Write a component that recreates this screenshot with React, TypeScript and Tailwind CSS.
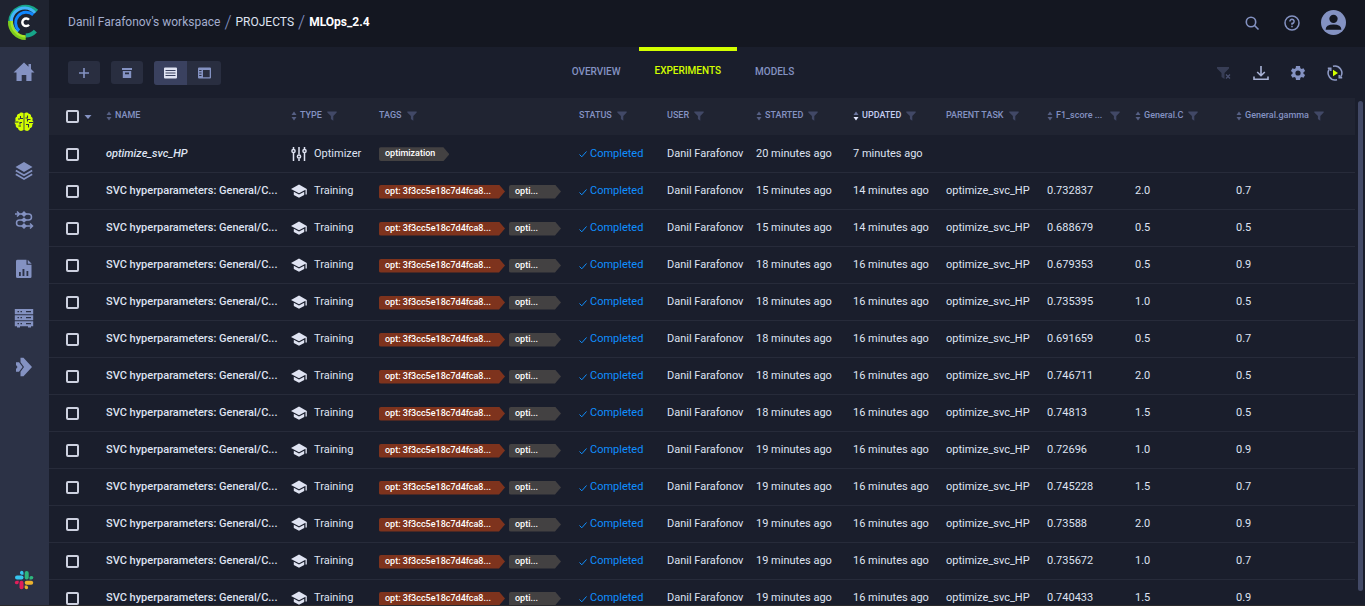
import type { ReactNode } from "react";

const rows = [
  ["15", "14", "0.732837", "2.0", "0.7"],
  ["15", "14", "0.688679", "0.5", "0.5"],
  ["18", "16", "0.679353", "0.5", "0.9"],
  ["18", "16", "0.735395", "1.0", "0.5"],
  ["18", "16", "0.691659", "0.5", "0.7"],
  ["18", "16", "0.746711", "2.0", "0.5"],
  ["18", "16", "0.74813", "1.5", "0.5"],
  ["19", "16", "0.72696", "1.0", "0.9"],
  ["19", "16", "0.745228", "1.5", "0.7"],
  ["19", "16", "0.73588", "2.0", "0.9"],
  ["19", "16", "0.735672", "1.0", "0.7"],
  ["19", "16", "0.740433", "1.5", "0.9"],
];

function Icon({ className, children, box = "0 0 24 24" }: { className: string; children: ReactNode; box?: string }) {
  return (
    <svg className={className} viewBox={box} fill="currentColor" aria-hidden="true">
      {children}
    </svg>
  );
}

function Logo() {
  return (
    <svg className="h-[47px] w-[49px]" viewBox="0 0 49 47" fill="none" aria-hidden="true">
      <path d="M9.700 22.300A16 16 0 0 1 37 11" stroke="#17a589" strokeWidth="3.200" />
      <path d="M17.500 32.300A13.200 13.200 0 1 1 35 13" stroke="#43b5fb" strokeWidth="3" />
      <path d="M19.200 30.600A10.500 10.500 0 1 1 33.200 14.900" stroke="#0f86ff" strokeWidth="2.800" />
      <path d="M25.700 35.500A13.300 13.300 0 0 0 35.400 31.200" stroke="#17a589" strokeWidth="4.200" />
      <path d="M9.500 21A16.500 16.500 0 0 0 25.700 38.600" stroke="#7ccb1c" strokeWidth="3" />
      <path d="M11.800 21A14.200 14.200 0 0 0 25.700 36.400" stroke="#a5e52b" strokeWidth="2.400" />
      <path d="M29 19.800A3.800 3.800 0 1 0 29 24.800" stroke="#fff" strokeWidth="2.500" />
    </svg>
  );
}

function Home() {
  return (
    <Icon className="size-6" box="0 1 24 24">
      <path d="M12 2.500 1.500 12.500H4.500V21H9.700V15H14.300V21H19.500V12.500H22.500L19 9.100V4H16.500V6.800Z" />
    </Icon>
  );
}

function Brain() {
  return (
    <svg className="size-5" viewBox="0 0 20 20" aria-hidden="true">
      <path
        fill="#d3ff00"
        d="M9.600 1.200C8.300 0 6 .3 5.300 1.700 3.500 1.700 2.600 3.200 3 4.600 1.400 5.300.9 6.900 1.700 8.300.2 9.600.3 11.800 1.800 12.800 1.300 14.600 2.400 16 4 16.200 4.500 18.300 6.300 19.400 8 18.800L9.600 18ZM10.400 1.200C11.700 0 14 .3 14.700 1.700 16.500 1.700 17.400 3.200 17 4.600 18.600 5.300 19.100 6.900 18.300 8.300 19.800 9.600 19.700 11.800 18.200 12.800 18.700 14.600 17.600 16 16 16.200 15.500 18.300 13.700 19.400 12 18.800L10.400 18Z"
      />
      <path
        fill="none"
        stroke="#2c3246"
        strokeWidth="1.100"
        d="M0 10H4.500M6.500 4V6.500H9M4 7H6M6 12.500V10.500H8M4.500 14H7M13.500 3.500V6H11.500M16.500 7.500H13.500V9.500M19.500 10.500H15M12 12.500H14.500V15.500"
      />
    </svg>
  );
}

function Layers() {
  return (
    <Icon className="size-5" box="0 0 20 20">
      <path d="M10 1 18.500 6 10 11 1.500 6Z" />
      <path fill="none" stroke="currentColor" strokeWidth="1.700" d="M1.800 9.600 10 14.300 18.200 9.600M1.800 13.300 10 18 18.200 13.300" />
    </Icon>
  );
}

function Pipeline() {
  return (
    <svg className="size-5" viewBox="0 0 20 20" fill="none" stroke="currentColor" strokeWidth="1.500" aria-hidden="true">
      <path d="M1 4H14.500A3 3 0 0 1 14.500 10H5.500A3 3 0 0 0 5.500 16H18M3 1.500 5.500 4 3 6.500M16 13.500 18.500 16 16 18.500" />
      <path fill="currentColor" stroke="none" d="M7 4 10 1 13 4 10 7ZM7 10 10 7.300 13 10 10 12.700ZM7 16 10 13 13 16 10 19Z" />
    </svg>
  );
}

function Report() {
  return (
    <Icon className="size-5" box="0 0 20 20">
      <path
        fillRule="evenodd"
        d="M3.500.8H12.500V5.800H17.500V17.700Q17.500 19 16.200 19H3.500Q2 19 2 17.700V2.200Q2 .8 3.500.8ZM5 13V17H6.800V13ZM8.500 10V17H10.400V10ZM12.500 12V17H14.300V12Z"
      />
      <path d="M13.700.8 17.700 4.700H13.700Z" />
    </Icon>
  );
}

function Servers() {
  return (
    <Icon className="size-5" box="0 0 20 20">
      <path
        fillRule="evenodd"
        d="M.8 1H19.200V6.200H.8ZM3.500 3V4.200H5V3ZM6.500 3V4.200H8V3ZM12 3V4.200H17V3ZM.8 7.200H19.200V12.200H.8ZM3.500 9V10.200H5V9ZM6.500 9V10.200H8V9ZM12 9V10.200H17V9ZM.8 13.200H19.200V18.200H17V19.500H14V18.200H6V19.500H3V18.200H.8ZM3.500 15V16.200H5V15ZM6.500 15V16.200H8V15ZM12 15V16.200H17V15Z"
      />
    </Icon>
  );
}

function Apps() {
  return (
    <Icon className="size-5" box="0 0 20 20">
      <path d="M6.500.8H9.500L18 10 9.500 19.200H6.500V14.800L10 10 6.500 5.200Z" />
      <path d="M2 5.200H5L8.700 10 5 14.800H2V12L3.500 10 2 8Z" />
    </Icon>
  );
}

function Slack() {
  return (
    <svg className="size-5" viewBox="0 0 20 20" aria-hidden="true">
      <g fill="#36c5f0">
        <rect x="1" y="5.500" width="8.500" height="4" rx="2" />
        <path d="M7.500.8A2 2 0 0 1 9.500 2.800V4.700H7.500A2 2 0 0 1 7.500.8Z" />
      </g>
      <g fill="#2eb67d">
        <rect x="10.700" y="1" width="4" height="8.500" rx="2" />
        <path d="M19.300 7.500A2 2 0 0 1 17.300 9.500H15.500V7.500A2 2 0 0 1 19.300 7.500Z" />
      </g>
      <g fill="#ecb22e">
        <rect x="10.700" y="10.700" width="8.500" height="4" rx="2" />
        <path d="M12.700 19.300A2 2 0 0 1 10.700 17.300V15.500H12.700A2 2 0 0 1 12.700 19.300Z" />
      </g>
      <g fill="#e01e5a">
        <rect x="5.500" y="10.700" width="4" height="8.500" rx="2" />
        <path d="M.8 12.700A2 2 0 0 1 2.800 10.700H4.700V12.700A2 2 0 0 1 .8 12.700Z" />
      </g>
    </svg>
  );
}

function SortArrows({ active = false }: { active?: boolean }) {
  return (
    <svg className="h-2.5 w-1.5 shrink-0" viewBox="0 0 6 10" aria-hidden="true">
      <path fill={active ? "#6b76a0" : "#566084"} d="M3 .5 5.500 4H.5Z" />
      <path fill={active ? "#e4e9ff" : "#566084"} d="M3 9.500 .5 6H5.500Z" />
    </svg>
  );
}

function Funnel() {
  return (
    <svg className="size-2.5 shrink-0" viewBox="0 0 10 10" aria-hidden="true">
      <path fill="#414866" d="M.3.5H9.700V1.500L6.300 5V9.800L3.900 8V5L.3 1.500Z" />
    </svg>
  );
}

function Head({ label, sort = false, filter = true, active = false, wide = false }: {
  label: string;
  sort?: boolean;
  filter?: boolean;
  active?: boolean;
  wide?: boolean;
}) {
  return (
    <th scope="col" className="px-2 pb-0.5 text-left font-medium">
      <div className="flex items-center">
        <button type="button" className={`flex items-center gap-[3px] ${active ? "text-[#c3cdf0]" : ""}`}>
          {sort && <SortArrows active={active} />}
          <span className="whitespace-nowrap">{label}</span>
        </button>
        {filter && (
          <button type="button" aria-label={`Filter ${label}`} className={wide ? "ml-2" : "ml-[5px]"}>
            <Funnel />
          </button>
        )}
      </div>
    </th>
  );
}

function Check({ label }: { label: string }) {
  return (
    <input
      type="checkbox"
      aria-label={label}
      className="block size-[13px] shrink-0 appearance-none rounded-[2px] border-2 border-[#cdd1e0] checked:bg-[#8492c2]"
    />
  );
}

function Tag({ children, red = false }: { children: ReactNode; red?: boolean }) {
  return (
    <span
      className={`block h-3.5 min-w-[52px] rounded-l-[2px] pr-3.5 pl-1.5 text-[9px] leading-[13px] font-medium whitespace-nowrap text-white [clip-path:polygon(0_0,calc(100%_-_6px)_0,100%_50%,calc(100%_-_6px)_100%,0_100%)] ${red ? "bg-[#7e331d]" : "bg-[#434142]"}`}
    >
      {children}
    </span>
  );
}

function Completed() {
  return (
    <span className="flex items-center gap-[3px] text-[#0f8fff]">
      <svg className="h-2 w-2" viewBox="0 0 8 8" fill="none" stroke="currentColor" aria-hidden="true">
        <path d="M.5 4.500 2.800 6.800 7.500 1.500" />
      </svg>
      Completed
    </span>
  );
}

function Row({ name, optimizer = false, started, updated, parent, f1, c, gamma }: {
  name: string;
  optimizer?: boolean;
  started: string;
  updated: string;
  parent?: string;
  f1?: string;
  c?: string;
  gamma?: string;
}) {
  return (
    <tr className="h-[37px] border-b border-[#272b3a] [&>td]:pt-0.5">
      <td className="pl-[17px]">
        <Check label={`Select ${name}`} />
      </td>
      <td className={`px-2 font-medium ${optimizer ? "italic" : ""}`}>{name}</td>
      <td className="pl-2">
        <span className="flex items-center gap-[7px]">
          {optimizer ? (
            <svg className="size-4" viewBox="0 0 16 16" fill="none" stroke="currentColor" strokeWidth="1.500" aria-hidden="true">
              <path d="M2.500 1V3M2.500 7V15M8 1V8.500M8 12.500V15M13.500 1V3M13.500 7V15" />
              <circle cx="2.500" cy="5" r="1.600" />
              <circle cx="8" cy="10.500" r="1.600" />
              <circle cx="13.500" cy="5" r="1.600" />
            </svg>
          ) : (
            <svg className="size-4" viewBox="0 1 16 16" fill="currentColor" aria-hidden="true">
              <path d="M8 1.500 0 6 8 10.200 14.500 6.800V11.500H15.800V6Z" />
              <path d="M2.800 8.800V12L8 14.700 13.200 12V8.800L8 11.600Z" />
            </svg>
          )}
          {optimizer ? "Optimizer" : "Training"}
        </span>
      </td>
      <td className="px-2">
        <span className="flex gap-1">
          {optimizer ? (
            <Tag>optimization</Tag>
          ) : (
            <>
              <Tag red>opt: 3f3cc5e18c7d4fca8...</Tag>
              <Tag>opti...</Tag>
            </>
          )}
        </span>
      </td>
      <td className="px-2">
        <Completed />
      </td>
      <td className="px-2">Danil Farafonov</td>
      <td className="px-2">{started} minutes ago</td>
      <td className="px-2">{updated} minutes ago</td>
      <td className="px-2">{parent}</td>
      <td className="px-2">{f1}</td>
      <td className="px-2">{c}</td>
      <td className="px-2">{gamma}</td>
    </tr>
  );
}

const nav = [
  { label: "Dashboard", icon: <Home /> },
  { label: "Projects", icon: <Brain /> },
  { label: "Datasets", icon: <Layers /> },
  { label: "Pipelines", icon: <Pipeline /> },
  { label: "Reports", icon: <Report /> },
  { label: "Workers and queues", icon: <Servers /> },
  { label: "Applications", icon: <Apps /> },
];

export default function App() {
  return (
    <div className="flex h-screen overflow-hidden border-b border-[#2b2a2c] bg-[#1a1e2c] font-[Roboto,sans-serif] text-[11px] text-[#dfe3f2]">
      <aside className="flex w-[49px] shrink-0 flex-col bg-[#2c3246] text-[#8492c2]">
        <a href="#home" aria-label="Home" className="block bg-[#1f2330]">
          <Logo />
        </a>
        <nav className="flex flex-col pt-px pr-px">
          {nav.map((item) => (
            <a key={item.label} href="#" aria-label={item.label} className="flex h-[49px] items-center justify-center">
              {item.icon}
            </a>
          ))}
        </nav>
        <a href="#slack" aria-label="Slack" className="mt-auto mb-[15px] flex justify-center pr-px">
          <Slack />
        </a>
      </aside>

      <div className="flex min-w-0 flex-1 flex-col">
        <header className="flex h-[47px] shrink-0 items-center justify-between bg-[#141721] pr-[19px] pb-0.5 pl-[19px]">
          <nav aria-label="Breadcrumb" className="flex items-center gap-1 pb-0.5 text-xs">
            <a href="#workspace" className="text-[#a3adce]">Danil Farafonov's workspace</a>
            <span className="text-lg leading-none font-light text-[#8492c2]">/</span>
            <a href="#projects" className="text-[#dfe3f2]">PROJECTS</a>
            <span className="text-lg leading-none font-light text-[#8492c2]">/</span>
            <a href="#project" className="font-bold text-white">MLOps_2.4</a>
          </nav>
          <div className="flex items-center text-[#8492c2]">
            <button type="button" aria-label="Search" className="mr-6">
              <svg className="size-4" viewBox="0 0 16 16" fill="none" stroke="currentColor" strokeWidth="1.600" aria-hidden="true">
                <circle cx="7" cy="7" r="4.700" />
                <path d="M10.300 10.300 14.500 14.500" />
              </svg>
            </button>
            <button type="button" aria-label="Help" className="mr-[21px]">
              <svg className="size-4" viewBox="0 0 16 16" fill="none" stroke="currentColor" strokeWidth="1.500" aria-hidden="true">
                <circle cx="8" cy="8" r="7" />
                <path d="M5.900 6.500A2.100 2.100 0 1 1 8 8.500V9.700M8 10.700V12.200" />
              </svg>
            </button>
            <button type="button" aria-label="Account">
              <svg className="size-[25px]" viewBox="0 0 24 24" aria-hidden="true">
                <circle cx="12" cy="12" r="12" fill="currentColor" />
                <circle cx="12" cy="8.500" r="4" fill="#141721" />
                <path fill="#141721" d="M4.500 18.500Q4.500 14 12 14T19.500 18.500V19H4.500Z" />
              </svg>
            </button>
          </div>
        </header>

        <div className="grid h-[51px] shrink-0 grid-cols-[1fr_auto_1fr] pr-[22px] pl-[19px] text-[#8492c2]">
          <div className="flex items-center">
            <button type="button" aria-label="New experiment" className="mr-[11px] flex h-[23px] w-8 items-center justify-center rounded-[3px] bg-[#292e40]">
              <svg className="size-2.5" viewBox="0 0 10 10" fill="none" stroke="currentColor" strokeWidth="1.600" aria-hidden="true">
                <path d="M5 0V10M0 5H10" />
              </svg>
            </button>
            <button type="button" aria-label="Archive" className="mr-[11px] flex h-[23px] w-8 items-center justify-center rounded-[3px] bg-[#292e40]">
              <svg className="size-2.5" viewBox="0 0 10 10" fill="currentColor" aria-hidden="true">
                <path fillRule="evenodd" d="M0 0H10V2H0ZM.8 3H9.200V10H.8ZM3 4.500V6.200H7V4.500Z" />
              </svg>
            </button>
            <div className="flex h-6 overflow-hidden rounded-[3px] bg-[#292e40]">
              <button type="button" aria-label="Table view" className="flex w-[33px] items-center justify-center bg-[#3a415f] text-[#dfe3f2]">
                <svg className="h-3 w-[13px]" viewBox="0 0 13 12" aria-hidden="true">
                  <path fill="currentColor" fillRule="evenodd" d="M1 .5H12Q13 .5 13 1.500V10.500Q13 11.500 12 11.500H1Q0 11.500 0 10.500V1.500Q0 .5 1 .5ZM1.500 3V4H11.500V3ZM1.500 5.500V6.500H11.500V5.500ZM1.500 8V9H11.500V8Z" />
                </svg>
              </button>
              <button type="button" aria-label="Details view" className="flex w-[34px] items-center justify-center">
                <svg className="h-3 w-[13px]" viewBox="0 0 13 12" aria-hidden="true">
                  <path fill="currentColor" fillRule="evenodd" d="M1 .5H12Q13 .5 13 1.500V10.500Q13 11.500 12 11.500H1Q0 11.500 0 10.500V1.500Q0 .5 1 .5ZM1.200 3V4H3.500V3ZM1.200 5.500V6.500H3.500V5.500ZM1.200 8V9H3.500V8ZM5 3V10.200H11.700V3Z" />
                </svg>
              </button>
            </div>
          </div>
          <nav aria-label="Project sections" className="flex pr-[45px] text-[10px] font-medium">
            <a href="#overview" className="flex items-center px-[18px] pb-0.5">OVERVIEW</a>
            <a href="#experiments" className="flex items-center border-t-4 border-[#d3ff00] px-4 pb-2 text-[#d3ff00]">EXPERIMENTS</a>
            <a href="#models" className="flex items-center px-[18px] pb-0.5">MODELS</a>
          </nav>
          <div className="flex items-center justify-end gap-[21px]">
            <button type="button" aria-label="Clear filters">
              <svg className="size-4" viewBox="0 0 16 16" aria-hidden="true">
                <path fill="#373d55" d="M1 2H13V3.500L8.500 8V14L5.500 12V8L1 3.500Z" />
                <path stroke="#4a5170" strokeWidth="1.200" d="M10 9.500 14 13.500M14 9.500 10 13.500" />
              </svg>
            </button>
            <button type="button" aria-label="Download" className="text-[#a9b3d6]">
              <svg className="size-4" viewBox="0 0 16 16" fill="none" stroke="currentColor" strokeWidth="1.600" aria-hidden="true">
                <path d="M8 1V10.500M4.200 7 8 10.700 11.800 7M1 11.500V14.200H15V11.500" />
              </svg>
            </button>
            <button type="button" aria-label="Settings">
              <Icon className="size-4" box="1 1 22 22">
                <path d="M19.500 12.900a7.700 7.700 0 0 0 0-1.900l2.300-1.700-2.200-3.900-2.700 1.100a8 8 0 0 0-1.700-1L14.800 2.500h-5.600l-.4 3a8 8 0 0 0-1.700 1L4.400 5.400 2.200 9.300 4.500 11a7.700 7.700 0 0 0 0 1.900l-2.300 1.800 2.200 3.900 2.700-1.100a8 8 0 0 0 1.700 1l.4 3h5.600l.4-3a8 8 0 0 0 1.700-1l2.700 1.100 2.200-3.900ZM12 15.600a3.600 3.600 0 1 1 0-7.200 3.600 3.600 0 0 1 0 7.200Z" />
              </Icon>
            </button>
            <button type="button" aria-label="Auto refresh" className="text-[#8f9bc6]">
              <svg className="size-4" viewBox="0 0 16 16" fill="none" stroke="currentColor" strokeWidth="1.500" aria-hidden="true">
                <path d="M6 1.300A7 7 0 0 1 13.600 12M10 14.700A7 7 0 0 1 2.400 4M.8 3.200H3.800V6M15.200 12.800H12.200V10" />
                <path fill="#d3ff00" stroke="none" d="M6 4.800 11 8 6 11.200Z" />
              </svg>
            </button>
          </div>
        </div>

        <main className="flex min-h-0 flex-1 items-stretch overflow-hidden">
          <div className="min-w-0 flex-1 overflow-hidden">
            <table className="w-full table-fixed border-collapse whitespace-nowrap">
              <colgroup>
                <col className="w-[49px]" />
                <col className="w-[185px]" />
                <col className="w-[88px]" />
                <col className="w-[200px]" />
                <col className="w-[88px]" />
                <col className="w-[89px]" />
                <col className="w-[97px]" />
                <col className="w-[93px]" />
                <col className="w-[101px]" />
                <col className="w-[88px]" />
                <col className="w-[101px]" />
                <col />
              </colgroup>
              <thead>
                <tr className="h-[37px] bg-[#202432] text-[9px] text-[#8492c2]">
                  <th scope="col" className="pl-[17px]">
                    <span className="flex items-center gap-[5px]">
                      <Check label="Select all" />
                      <button type="button" aria-label="Selection options">
                        <svg className="h-1 w-2" viewBox="0 0 8 4" fill="currentColor" aria-hidden="true">
                          <path d="M.5 0H7.500L4 4Z" />
                        </svg>
                      </button>
                    </span>
                  </th>
                  <Head label="NAME" sort filter={false} />
                  <Head label="TYPE" sort />
                  <Head label="TAGS" />
                  <Head label="STATUS" />
                  <Head label="USER" />
                  <Head label="STARTED" sort />
                  <Head label="UPDATED" sort active />
                  <Head label="PARENT TASK" />
                  <Head label="F1_score ..." sort wide />
                  <Head label="General.C" sort />
                  <Head label="General.gamma" sort />
                </tr>
              </thead>
              <tbody>
                <Row name="optimize_svc_HP" optimizer started="20" updated="7" />
                {rows.map(([started, updated, f1, c, gamma], i) => (
                  <Row
                    key={i}
                    name="SVC hyperparameters: General/C..."
                    started={started}
                    updated={updated}
                    parent="optimize_svc_HP"
                    f1={f1}
                    c={c}
                    gamma={gamma}
                  />
                ))}
              </tbody>
            </table>
          </div>
          <div className="flex w-2.5 shrink-0 justify-center pt-[3px] pb-3.5">
            <div className="w-[5px] rounded-full bg-[#424966]" />
          </div>
        </main>
      </div>
    </div>
  );
}
